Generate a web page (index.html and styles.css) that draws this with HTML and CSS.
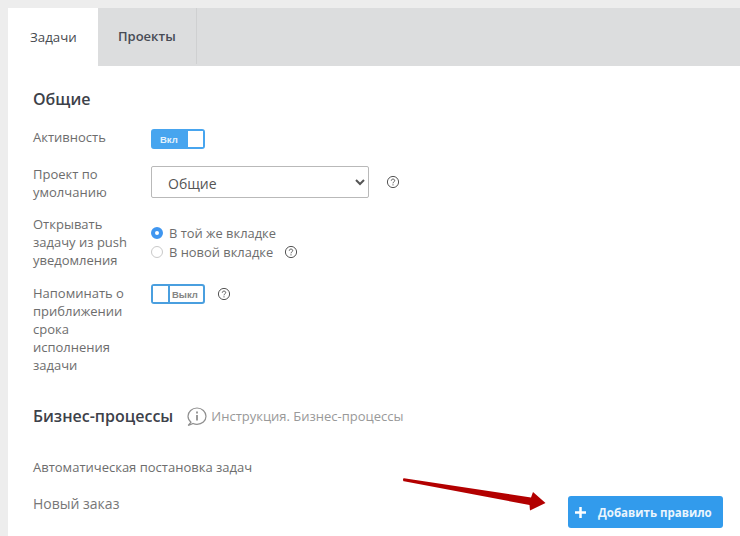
FILE: index.html
```html
<!DOCTYPE html>
<html lang="ru">
<head>
<meta charset="utf-8">
<title>Задачи</title>
<link rel="stylesheet" href="styles.css">
</head>
<body>
<main class="panel">
  <nav class="tabs">
    <div class="tab tab-active">Задачи</div>
    <div class="tab">Проекты</div>
  </nav>
  <div class="content">
    <h2 class="heading">Общие</h2>
    <div class="row row-active">
      <div class="label label-active">Активность</div>
      <div class="switch switch-on"><span class="switch-text">Вкл</span><span class="knob"></span></div>
    </div>
    <div class="row row-project">
      <div class="label">Проект по умолчанию</div>
      <div class="control">
        <select class="select"><option>Общие</option></select>
        <svg class="help help-select" viewBox="0 0 14 14"><use href="#q"/></svg>
      </div>
    </div>
    <div class="row row-push">
      <div class="label">Открывать задачу из push уведомления</div>
      <div class="radios">
        <div class="radio-line"><span class="radio radio-on"></span>В той же вкладке</div>
        <div class="radio-line"><span class="radio"></span>В новой вкладке<svg class="help help-radio" viewBox="0 0 14 14"><use href="#q"/></svg></div>
      </div>
    </div>
    <div class="row row-remind">
      <div class="label">Напоминать о приближении срока исполнения задачи</div>
      <div class="control control-top">
        <div class="switch switch-off"><span class="knob"></span><span class="switch-text">Выкл</span></div>
        <svg class="help help-switch" viewBox="0 0 14 14"><use href="#q"/></svg>
      </div>
    </div>
    <div class="biz-head">
      <h2 class="heading">Бизнес-процессы</h2>
      <svg class="info" viewBox="0 0 20 20" fill="none" stroke="#8f8f8f" stroke-width="1.2">
        <path d="M4 16.200C2.200 14.800 1 12.700 1 10.300 1 5.800 5 2 10 2s9 3.800 9 8.300-4 8-9 8c-1.400 0-2.700-.3-3.900-.8L1.200 19.500 4 16.200z"/>
        <path d="M10 9v5.500" stroke-width="1.800"/>
        <path d="M10 5.600v1.800" stroke-width="1.800"/>
      </svg>
      <span class="biz-link">Инструкция. Бизнес-процессы</span>
    </div>
    <div class="auto">Автоматическая постановка задач</div>
    <div class="rule">
      <span class="rule-name">Новый заказ</span>
      <button class="add" type="button"><svg class="plus" viewBox="0 0 11 11"><path d="M5.500 0v11M0 5.500h11" stroke="#fff" stroke-width="2.500" fill="none"/></svg>Добавить правило</button>
    </div>
  </div>
  <svg class="arrow" viewBox="0 0 150 36" width="150" height="36">
    <path d="M1 2.300L128 21.500 130 16 142.500 27 127 34.500 126.500 29 1 5.300C-.3 5 -.3 2.300 1 2.300Z" fill="#b30000"/>
  </svg>
</main>
<svg class="defs" width="0" height="0">
  <defs>
    <g id="q" fill="none" stroke="#555">
      <circle cx="7" cy="7" r="5.600" stroke-width="1"/>
      <path d="M5.300 5.700C5.300 4.700 6 4.100 7 4.100s1.700.6 1.700 1.500c0 1.300-1.700 1.300-1.700 2.700" stroke-width="1"/>
      <path d="M7 9.300v1.100" stroke-width="1"/>
    </g>
  </defs>
</svg>
</body>
</html>
```
FILE: styles.css
```css
html, body {
  margin: 0;
  height: 536px;
  overflow: hidden;
  background: #ededed;
  font-family: "Open Sans", sans-serif;
}
body {
  padding: 8px 0 0 8px;
  box-sizing: border-box;
}
.panel {
  position: relative;
  background: #fff;
  height: 528px;
  overflow: hidden;
}
.tabs {
  display: flex;
  height: 58px;
  background: #dcddde;
}
.tab {
  box-sizing: border-box;
  width: 99px;
  font-size: 13px;
  line-height: 18px;
  font-weight: 600;
  color: #474b55;
  border-right: 1px solid #cfd0d1;
  height: 56px;
  padding: 19px 0 0 20px;
}
.tab-active {
  width: 90px;
  height: 58px;
  padding: 20px 0 0 22px;
  background: #fff;
  border: 0;
  font-size: 13.300px;
  font-weight: 400;
  color: #474b50;
}
.content {
  padding: 21px 17px 0 25px;
}
.heading {
  margin: 0;
  font-size: 16px;
  line-height: 24px;
  font-weight: 600;
  color: #3d4149;
}
.row {
  display: grid;
  grid-template-columns: 100px 1fr;
  column-gap: 18px;
}
.label {
  font-size: 13px;
  line-height: 18px;
  color: #6d6d6d;
}
.label-active {
  margin-top: -1px;
}
.row-active {
  margin-top: 18px;
}
.row-project {
  margin-top: 16px;
}
.row-push {
  margin-top: 14px;
}
.row-remind {
  margin-top: 15px;
}
.switch {
  box-sizing: border-box;
  display: flex;
  align-items: center;
  width: 54px;
  height: 20px;
  border: 2px solid #47a5ef;
  border-radius: 3px;
}
.switch-on {
  background: #47a5ef;
  justify-content: space-between;
}
.switch-off {
  background: #fff;
  border-color: #4a9fdf;
}
.switch-text {
  font-family: "Liberation Sans", sans-serif;
  font-size: 9.500px;
  font-weight: 700;
}
.switch-on .switch-text {
  color: #e4f2fd;
  padding-left: 7px;
}
.switch-off .switch-text {
  color: #858585;
  padding-left: 2px;
}
.knob {
  width: 15px;
  height: 16px;
  background: #fff;
}
.switch-off .knob {
  border-right: 2px solid #4a9fdf;
}
.control {
  display: flex;
  align-items: center;
  height: 32px;
  margin-top: 1px;
}
.control-top {
  height: 20px;
  margin-top: 0;
}
.select {
  box-sizing: border-box;
  width: 218px;
  height: 32px;
  padding: 2px 0 0 12px;
  background: #fff;
  border: 1px solid #b9b9b9;
  border-radius: 2px;
  font-family: "Open Sans", sans-serif;
  font-size: 14px;
  color: #555;
}
.help {
  width: 14px;
  height: 14px;
  flex: none;
}
.help-select {
  margin-left: 17px;
}
.help-radio {
  margin-left: 11px;
}
.help-switch {
  margin-left: 12px;
}
.radios {
  padding-top: 8px;
}
.radio-line {
  display: flex;
  align-items: center;
  height: 19px;
  font-size: 12.900px;
  color: #6d6d6d;
}
.radio {
  box-sizing: border-box;
  width: 12px;
  height: 12px;
  margin-right: 6px;
  border: 1px solid #c9c9c9;
  border-radius: 50%;
  background: #fff;
}
.radio-on {
  border: 4px solid #3f96f0;
}
.biz-head {
  display: flex;
  align-items: center;
  margin-top: 30px;
}
.info {
  width: 20px;
  height: 20px;
  margin-left: 14px;
}
.biz-link {
  margin-left: 4px;
  font-size: 13px;
  color: #999;
}
.auto {
  margin-top: 30px;
  font-size: 13px;
  line-height: 18px;
  color: #6d6d6d;
}
.rule {
  display: flex;
  justify-content: space-between;
  align-items: center;
  margin-top: 20px;
}
.rule-name {
  font-size: 14px;
  color: #777;
  margin-top: -18px;
}
.add {
  display: flex;
  align-items: center;
  box-sizing: border-box;
  width: 155px;
  height: 32px;
  padding: 0 0 0 7px;
  border: 0;
  border-radius: 3px;
  background: #329bec;
  color: #eaf5fd;
  font-family: "Open Sans", sans-serif;
  font-size: 11.500px;
  font-weight: 700;
}
.plus {
  width: 11px;
  height: 11px;
  margin-right: 12px;
}
.arrow {
  position: absolute;
  left: 395px;
  top: 468px;
}
.defs {
  position: absolute;
}
```
